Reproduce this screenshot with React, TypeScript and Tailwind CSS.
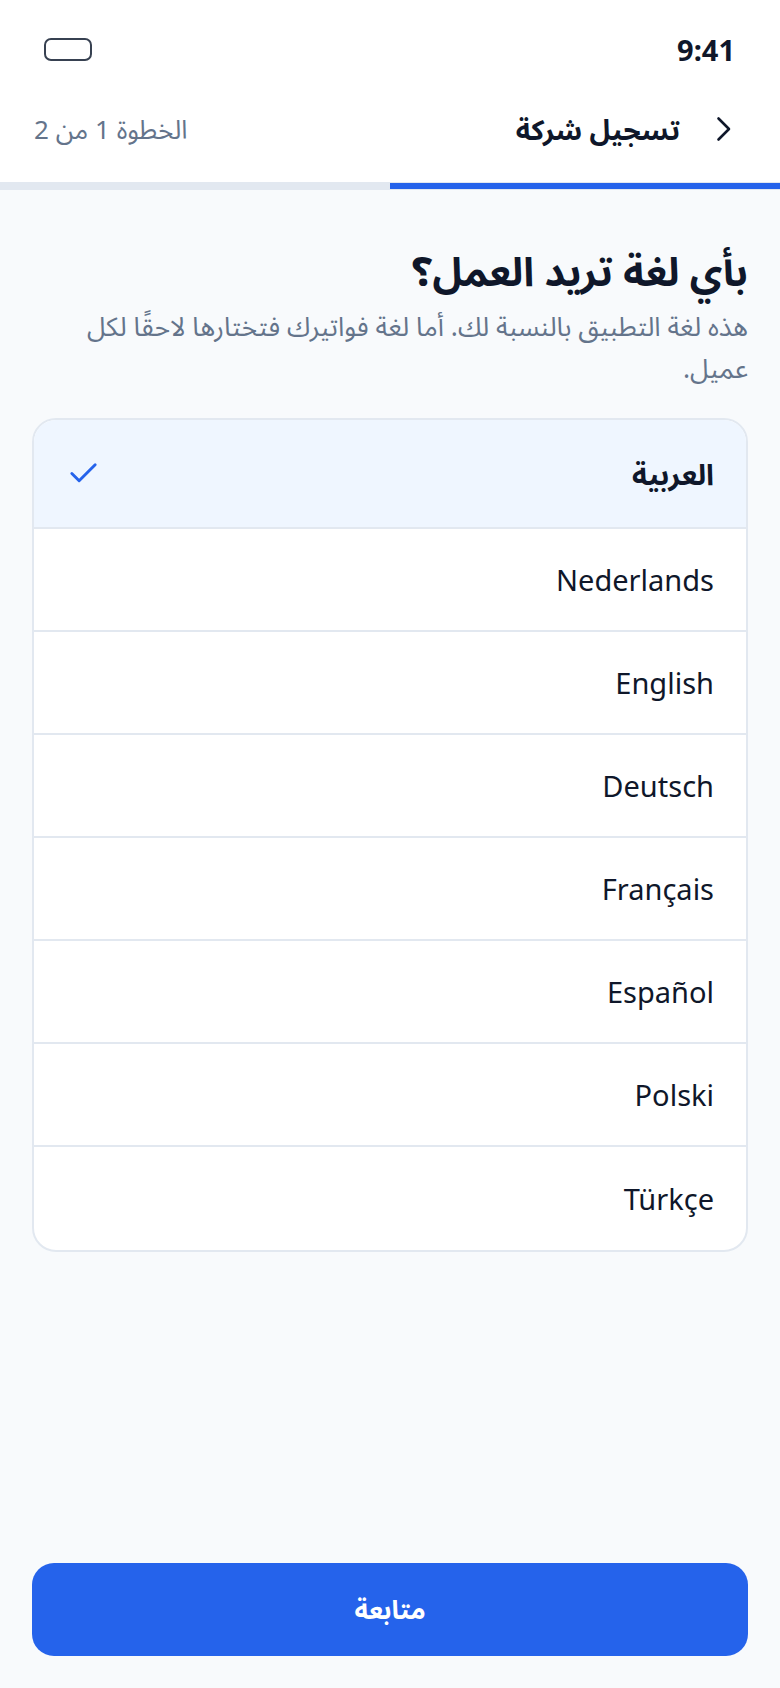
import { Check } from "lucide-react";

const languages = [
  { label: "العربية", selected: true },
  { label: "Nederlands" },
  { label: "English" },
  { label: "Deutsch" },
  { label: "Français" },
  { label: "Español" },
  { label: "Polski" },
  { label: "Türkçe" },
];

const font = "font-['Noto_Sans','Noto_Sans_Arabic','DejaVu_Sans',sans-serif]";

export default function App() {
  return (
    <div dir="rtl" className={`flex h-[1688px] flex-col bg-[#f8fafc] text-[#0f172a] ${font}`}>
      <header className="bg-white">
        <div className="flex h-[96px] items-center justify-between pl-[44px] pr-[45px] pt-[2px]">
          <span dir="ltr" className="text-[29px] font-bold leading-none">
            9:41
          </span>
          <span className="h-[23px] w-[48px] rounded-[7px] border-2 border-[#374151]" />
        </div>
        <div className="flex h-[66px] items-center justify-between pl-[34px] pr-[48px]">
          <div className="flex items-center gap-[36px]">
            <svg width="16" height="26" viewBox="0 0 16 26" fill="none" className="shrink-0">
              <polyline
                points="2.5,2.5 13,13 2.5,23.5"
                stroke="#0f172a"
                strokeWidth="2.6"
                strokeLinecap="round"
                strokeLinejoin="round"
              />
            </svg>
            <h1 className="text-[28px] font-bold">تسجيل شركة</h1>
          </div>
          <span className="text-[26px] text-[#64748b]">الخطوة 1 من 2</span>
        </div>
        <div className="mt-5 flex h-2 items-center bg-[#e2e8f0]">
          <div className="h-[6px] w-1/2 bg-[#2563eb]" />
        </div>
      </header>

      <main className="flex flex-1 flex-col px-8 pt-[54px]">
        <h2 className="text-[40px] font-bold leading-[54px]">بأي لغة تريد العمل؟</h2>
        <p className="mt-[7px] pl-8 text-[26.5px] leading-[42px] text-[#64748b]">
          هذه لغة التطبيق بالنسبة لك. أما لغة فواتيرك فتختارها لاحقًا لكل عميل.
        </p>

        <ul className="mt-[29px] overflow-hidden rounded-3xl border-2 border-[#e2e8f0] bg-white">
          {languages.map((lang) => (
            <li
              key={lang.label}
              className={
                lang.selected
                  ? "flex h-[109px] items-center justify-between border-b-2 border-[#e2e8f0] bg-[#eff6ff] px-8"
                  : "flex h-[103px] items-center justify-between border-b-2 border-[#e2e8f0] px-8 last:border-b-0"
              }
            >
              <span className={lang.selected ? "text-[29px] font-bold" : "text-[29px]"}>{lang.label}</span>
              {lang.selected ? <Check className="size-[35px] text-[#2563eb]" strokeWidth={2} /> : null}
            </li>
          ))}
        </ul>

        <div className="mt-auto pb-8">
          <button
            type="button"
            className="flex h-[93px] w-full items-center justify-center rounded-[22px] bg-[#2563eb] text-[26px] font-bold text-white"
          >
            متابعة
          </button>
        </div>
      </main>
    </div>
  );
}
